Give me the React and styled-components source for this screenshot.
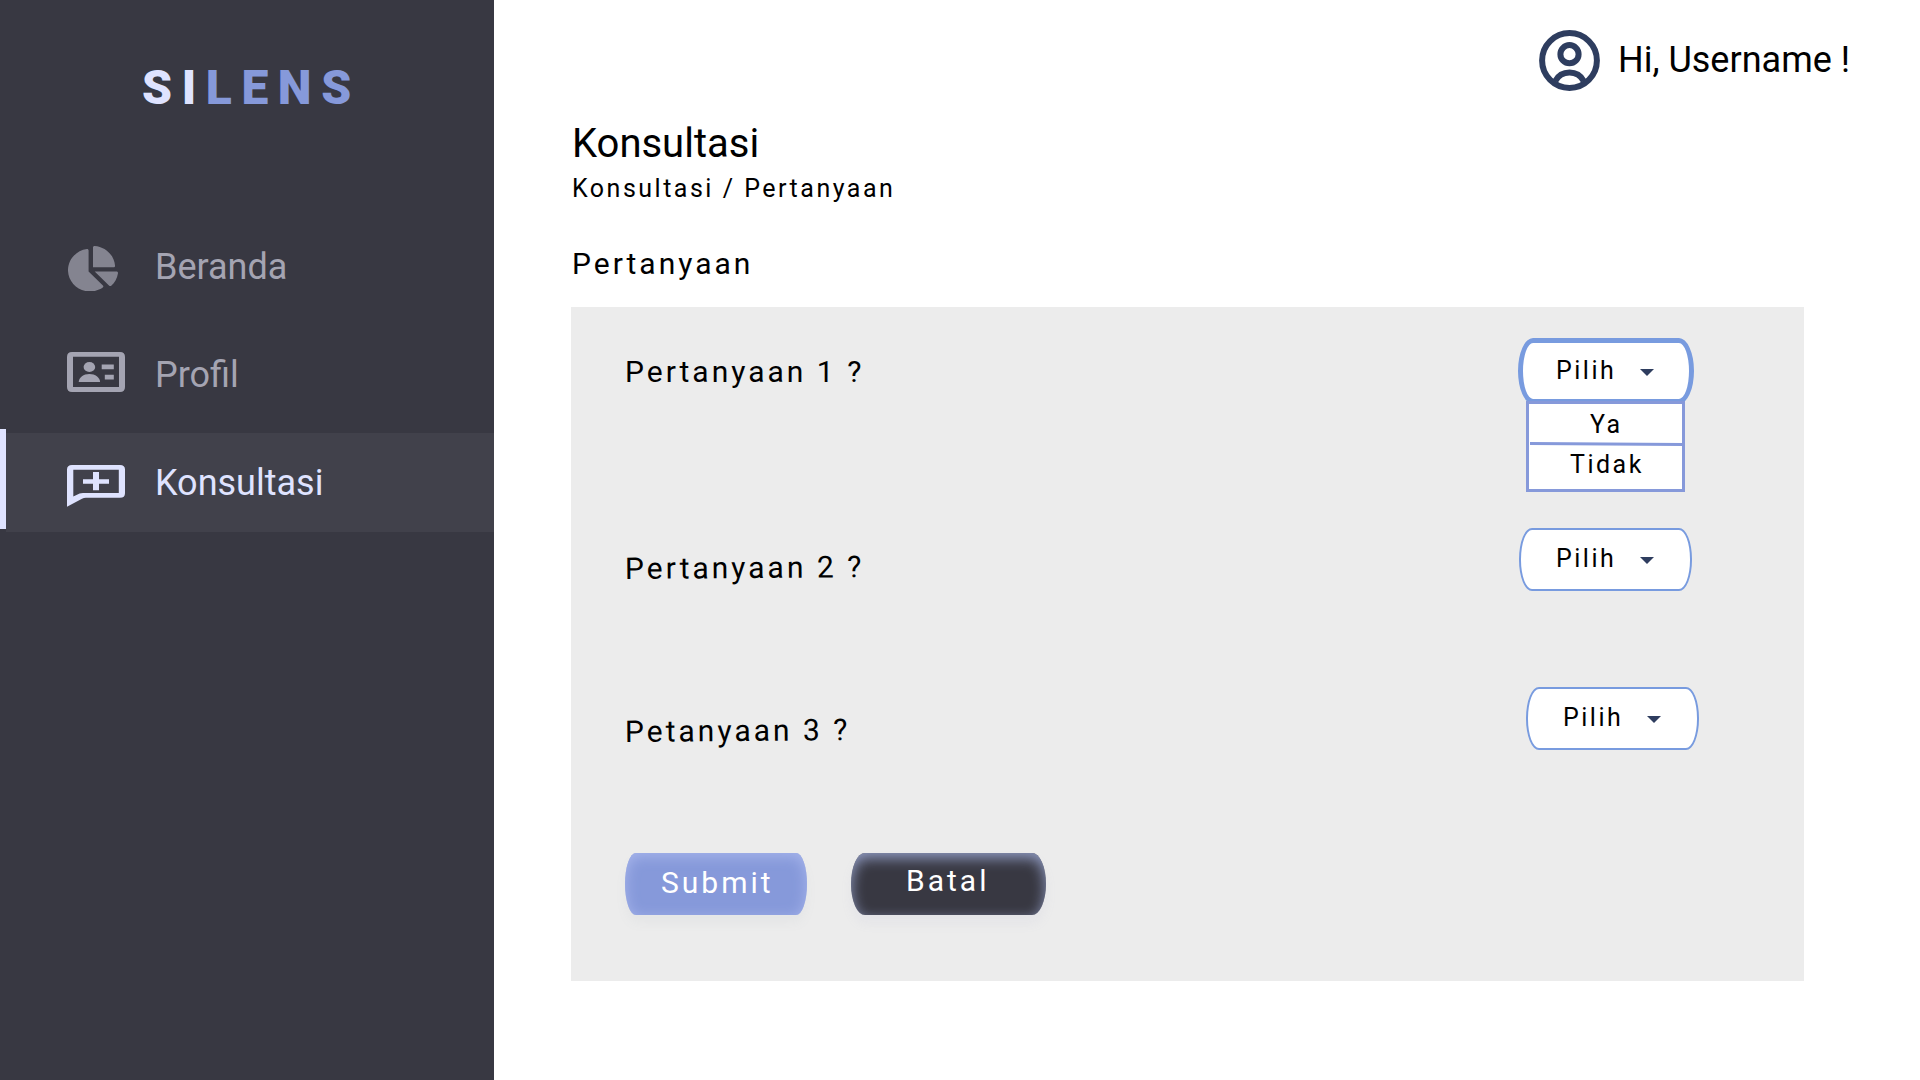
import React from "react";
import styled, { createGlobalStyle, css } from "styled-components";

const GlobalStyle = createGlobalStyle`
  *, *::before, *::after { box-sizing: border-box; }
  body { margin: 0; background: #ffffff; font-family: Roboto, "Liberation Sans", sans-serif; color: #000000; }
`;

const Page = styled.div`
  display: flex;
  width: 1920px;
  height: 1080px;
  overflow: hidden;
  background: #ffffff;
`;

const Sidebar = styled.aside`
  display: flex;
  flex-direction: column;
  width: 494px;
  height: 100%;
  background: #383842;
`;

const Logo = styled.div`
  padding: 60px 0 0 142px;
  height: 217px;
  font-size: 48px;
  font-weight: 900;
  line-height: 56px;
  letter-spacing: 0.2em;
  white-space: nowrap;
  color: #8699da;
`;

const LogoAccent = styled.span`
  color: #dfe3ff;
`;

const Nav = styled.nav`
  display: flex;
  flex-direction: column;
  gap: 9px;
`;

const NavItem = styled.a`
  position: relative;
  display: flex;
  align-items: center;
  gap: 30px;
  height: 99px;
  margin-left: 6px;
  padding: 1px 0 0 61px;
  font-size: 36px;
  line-height: 42px;
  color: ${({ $active }) => ($active ? "#dfe3ff" : "#a4a4b2")};
  ${({ $active }) =>
    $active &&
    css`
      background: #41414b;
      &::before {
        content: "";
        position: absolute;
        left: -6px;
        top: -4px;
        width: 6px;
        height: 100px;
        background: #dfe3ff;
      }
    `}
`;

const NavIcon = styled.span`
  display: flex;
  width: 58px;
  padding-left: ${({ $inset = 0 }) => $inset}px;
  margin-top: ${({ $shift = 0 }) => $shift}px;
`;

const Main = styled.main`
  display: flex;
  flex-direction: column;
  flex: 1;
  padding: 30px 116px 0 77px;
`;

const UserBar = styled.header`
  display: flex;
  align-items: center;
  align-self: flex-end;
  gap: 18px;
  height: 61px;
  margin-right: -46px;
  font-size: 36px;
  line-height: 42px;
  white-space: nowrap;
`;

const UserName = styled.span`
  margin-top: -2px;
`;

const Title = styled.h1`
  margin: 29px 0 0 1px;
  font-size: 40px;
  font-weight: 400;
  line-height: 47px;
`;

const Breadcrumb = styled.div`
  margin: 7px 0 0 1px;
  font-size: 25px;
  line-height: 29px;
  letter-spacing: 0.1em;
`;

const SectionTitle = styled.h2`
  margin: 43px 0 26px 1px;
  font-size: 30px;
  font-weight: 400;
  line-height: 35px;
  letter-spacing: 0.1em;
`;

const Panel = styled.section`
  display: flex;
  flex-direction: column;
  height: 674px;
  padding: 31px 0 0 54px;
  background: #ececec;
`;

const Question = styled.div`
  display: flex;
  align-items: flex-start;
  justify-content: space-between;
  height: ${({ $height }) => $height}px;
  padding-right: ${({ $right }) => $right}px;
`;

const Label = styled.div`
  margin-top: ${({ $top }) => $top}px;
  font-size: 30px;
  line-height: 35px;
  letter-spacing: 0.1em;
  transform: ${({ $tilt }) => ($tilt ? `rotate(${$tilt}deg)` : "none")};
`;

const SelectWrap = styled.div`
  position: relative;
`;

const Select = styled.div`
  display: flex;
  align-items: flex-start;
  justify-content: space-between;
  width: ${({ $open }) => ($open ? 176 : 173)}px;
  height: ${({ $open }) => ($open ? 66 : 63)}px;
  padding: ${({ $open }) => ($open ? "13px 35px 0 33px" : "14px 36px 0 35px")};
  border: ${({ $open }) => ($open ? 5 : 2)}px solid #789bdf;
  border-radius: ${({ $open }) => ($open ? "15px / 33px" : "13px / 31px")};
  background: #ffffff;
  font-size: 25px;
  line-height: 29px;
  letter-spacing: 0.1em;
`;

const Caret = styled.svg`
  display: block;
  width: 14px;
  height: 7px;
  margin-top: 13px;
  fill: #2e3d5f;
`;

const Menu = styled.div`
  position: absolute;
  left: 8px;
  top: 63px;
  width: 159px;
  height: 91px;
  padding-top: 6px;
  border: 3px solid #8699da;
  background: #ffffff;
  font-size: 25px;
  line-height: 29px;
  letter-spacing: 0.1em;
`;

const Option = styled.div`
  padding-left: ${({ $left }) => $left}px;
`;

const Divider = styled.svg`
  display: block;
  width: 153px;
  height: 5px;
  margin: 3px 0 3px;
`;

const Actions = styled.div`
  display: flex;
  gap: 44px;
`;

const Button = styled.button`
  display: block;
  height: 62px;
  border: 0;
  font-family: inherit;
  font-size: 30px;
  line-height: 35px;
  letter-spacing: 0.1em;
  text-align: left;
  color: #ffffff;
`;

const SubmitButton = styled(Button)`
  width: 182px;
  padding: 12px 0 15px 36px;
  border-radius: 11px / 31px;
  background: #8699da;
  box-shadow:
    inset 0 3px 14px #a8b6ec,
    0 8px 12px rgba(120, 130, 160, 0.06);
`;

const CancelButton = styled(Button)`
  width: 195px;
  padding: 10px 0 17px 55px;
  border-radius: 14px / 31px;
  background: #383842;
  box-shadow:
    inset 0 5px 14px rgba(154, 166, 208, 0.9),
    0 8px 12px rgba(150, 150, 200, 0.09);
`;

const PieIcon = () => (
  <svg width="50" height="45.5" viewBox="0 0 544 512" preserveAspectRatio="none" fill="#848490">
    <path d="M527.79 288H290.5l158.03 158.03c6.04 6.04 15.98 6.53 22.19.68 38.7-36.46 65.32-85.61 73.13-140.86 1.34-9.46-6.51-17.85-16.06-17.85zm-15.83-64.8C503.72 103.74 408.26 8.28 288.8.04 279.68-.59 272 7.1 272 16.24V240h223.77c9.14 0 16.82-7.68 16.19-16.8zM224 288V50.71c0-9.55-8.39-17.4-17.84-16.06C86.99 51.49-4.1 155.6.14 280.37 4.5 408.51 114.83 513.59 243.03 511.98c50.4-.63 96.97-16.87 135.26-44.03 7.9-5.6 8.42-17.23 1.57-24.08L224 288z" />
  </svg>
);

const CardIcon = () => (
  <svg width="58" height="40" viewBox="0 0 58 40" fill="#a4a4b2">
    <path
      fillRule="evenodd"
      d="M5 0H53Q58 0 58 5V35Q58 40 53 40H5Q0 40 0 35V5Q0 0 5 0ZM6 4.8V35H52V4.8Z"
    />
    <ellipse cx="22.4" cy="15" rx="5.8" ry="5.1" />
    <path d="M11.7 30C12 25.5 16.5 22 22.4 22S32.8 25.5 33.1 30Z" />
    <path d="M34.7 12.5H46.8V17.3H34.7ZM37.8 22.7H46.8V27.6H37.8Z" />
  </svg>
);

const ChatIcon = () => (
  <svg width="58" height="42" viewBox="0 0 58 42" fill="#dfe3ff">
    <path
      fillRule="evenodd"
      d="M5 0H53Q58 0 58 4.5V28.2Q58 32.7 53 32.7H19Q16.8 32.7 15 33.7L0 41.8V4.5Q0 0 5 0ZM6.3 4.8V31.6L12.6 28.6Q14 28 16 28H51.8V4.8Z"
    />
    <path d="M26 7H32V14.2H42V18.8H32V25.2H26V18.8H16V14.2H26Z" />
  </svg>
);

const AvatarIcon = () => (
  <svg width="61" height="61" viewBox="0 0 61 61" fill="none" stroke="#2e3d5f" strokeWidth="6">
    <circle cx="30.5" cy="30.5" r="27.4" />
    <circle cx="30.5" cy="24.2" r="9.1" />
    <path d="M16.2 51.2A16.2 16.2 0 0 1 44.8 51.2" />
  </svg>
);

const navItems = [
  { label: "Beranda", Icon: PieIcon, inset: 1, shift: 3 },
  { label: "Profil", Icon: CardIcon, shift: -6 },
  { label: "Konsultasi", Icon: ChatIcon, shift: 6, active: true },
];

const questions = [
  { label: "Pertanyaan 1 ?", height: 190, right: 110, top: 16, open: true },
  { label: "Pertanyaan 2 ?", height: 159, right: 112, top: 22, tilt: -0.45 },
  { label: "Petanyaan 3 ?", height: 166, right: 105, top: 25.5, tilt: -0.45 },
];

export default function App() {
  return (
    <>
      <GlobalStyle />
      <Page>
        <Sidebar>
          <Logo>
            <LogoAccent>SI</LogoAccent>LENS
          </Logo>
          <Nav>
            {navItems.map(({ label, Icon, inset, shift, active }) => (
              <NavItem key={label} $active={active}>
                <NavIcon $inset={inset} $shift={shift}>
                  <Icon />
                </NavIcon>
                {label}
              </NavItem>
            ))}
          </Nav>
        </Sidebar>
        <Main>
          <UserBar>
            <AvatarIcon />
            <UserName>Hi, Username !</UserName>
          </UserBar>
          <Title>Konsultasi</Title>
          <Breadcrumb>Konsultasi / Pertanyaan</Breadcrumb>
          <SectionTitle>Pertanyaan</SectionTitle>
          <Panel>
            {questions.map(({ label, height, right, top, tilt, open }) => (
              <Question key={label} $height={height} $right={right}>
                <Label $top={top} $tilt={tilt}>
                  {label}
                </Label>
                <SelectWrap>
                  <Select $open={open}>
                    Pilih
                    <Caret viewBox="0 0 14 7">
                      <path d="M0 0H14L7 7Z" />
                    </Caret>
                  </Select>
                  {open && (
                    <Menu>
                      <Option $left={61}>Ya</Option>
                      <Divider viewBox="0 0 153 5">
                        <path d="M1 1.5L153 2.5" stroke="#8699da" strokeWidth="3" />
                      </Divider>
                      <Option $left={41}>Tidak</Option>
                    </Menu>
                  )}
                </SelectWrap>
              </Question>
            ))}
            <Actions>
              <SubmitButton>Submit</SubmitButton>
              <CancelButton>Batal</CancelButton>
            </Actions>
          </Panel>
        </Main>
      </Page>
    </>
  );
}
